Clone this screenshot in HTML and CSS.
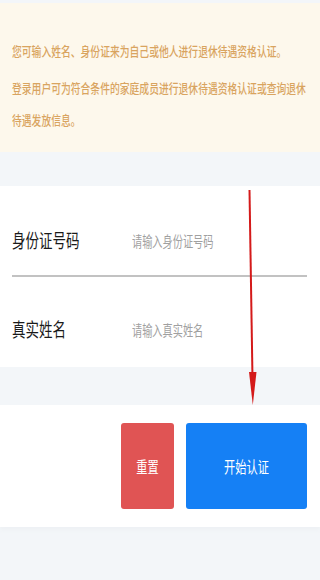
FILE: index.html
```html
<!DOCTYPE html>
<html lang="zh-CN">
<head>
    <meta charset="UTF-8">
    <meta name="viewport" content="width=device-width, initial-scale=1.0">
    <title>退休待遇资格认证</title>
    <link rel="stylesheet" href="styles.css">
</head>
<body>
    <div class="aviso">
        <p>您可输入姓名、身份证来为自己或他人进行退休待遇资格认证。</p>
        <p>登录用户可为符合条件的家庭成员进行退休待遇资格认证或查询退休待遇发放信息。</p>
    </div>
    <section class="form">
        <div class="linha primeira">
            <span class="rotulo">身份证号码</span>
            <input type="text" placeholder="请输入身份证号码">
        </div>
        <div class="linha">
            <span class="rotulo">真实姓名</span>
            <input type="text" placeholder="请输入真实姓名">
        </div>
    </section>
    <section class="acoes">
        <button class="reset"><span>重置</span></button>
        <button class="iniciar"><span>开始认证</span></button>
    </section>
    <svg class="seta" width="320" height="580" viewBox="0 0 320 580">
        <line x1="249.5" y1="190" x2="252.6" y2="385" stroke="#d41a1a" stroke-width="2"/>
        <polygon points="249,372 256.5,372 252.8,405" fill="#d41a1a"/>
    </svg>
</body>
</html>
```

FILE: styles.css
```css
body {
    margin: 0;
    width: 320px;
    min-height: 580px;
    background-color: #f3f6f9;
    font-family: "Noto Sans CJK SC", "Noto Sans", sans-serif;
    position: relative;
    overflow: hidden;
}
/* o print original esta esticado na vertical, por isso o scaleY nos textos */
.aviso {
    margin-top: 3px;
    padding: 32px 10px 31px 12px;
    background-color: #fdf8ec;
    color: #d9a45f;
    font-size: 9.8px;
    font-weight: 500;
}
.aviso p {
    margin: 0;
    line-height: 24.6px;
    transform: scaleY(1.3);
    transform-origin: top;
}
.aviso p + p {
    margin-top: 12.4px;
}
.form {
    margin-top: 34px;
    background-color: #fff;
    padding: 0 13px 0 12px;
}
.linha {
    display: grid;
    grid-template-columns: 120px 1fr;
    align-items: center;
    padding: 40px 0 26px;
    line-height: 24px;
}
.linha.primeira {
    padding: 42px 0 23px;
    border-bottom: 2px solid #c2c2c2;
}
.rotulo {
    font-size: 13.5px;
    color: #1a1a1a;
    transform: scaleY(1.4);
}
input {
    border: none;
    outline: none;
    padding: 0;
    font-family: inherit;
    font-size: 10.2px;
    background: transparent;
    transform: scaleY(1.4);
}
input::placeholder {
    color: #a0a0a0;
}
.acoes {
    margin-top: 38px;
    background-color: #fff;
    display: flex;
    justify-content: flex-end;
    gap: 12px;
    padding: 18px 13px 18px 0;
    box-shadow: 0 3px 4px #eef1f4;
}
button {
    border: none;
    height: 86px;
    border-radius: 3px;
    color: #fff;
    font-family: inherit;
    font-size: 11.2px;
}
button span {
    display: inline-block;
    transform: scaleY(1.4);
}
.reset {
    width: 53px;
    background-color: #e05454;
}
.iniciar {
    width: 121px;
    background-color: #1580f5;
}
.seta {
    position: absolute;
    top: 0;
    left: 0;
    pointer-events: none;
}
```
